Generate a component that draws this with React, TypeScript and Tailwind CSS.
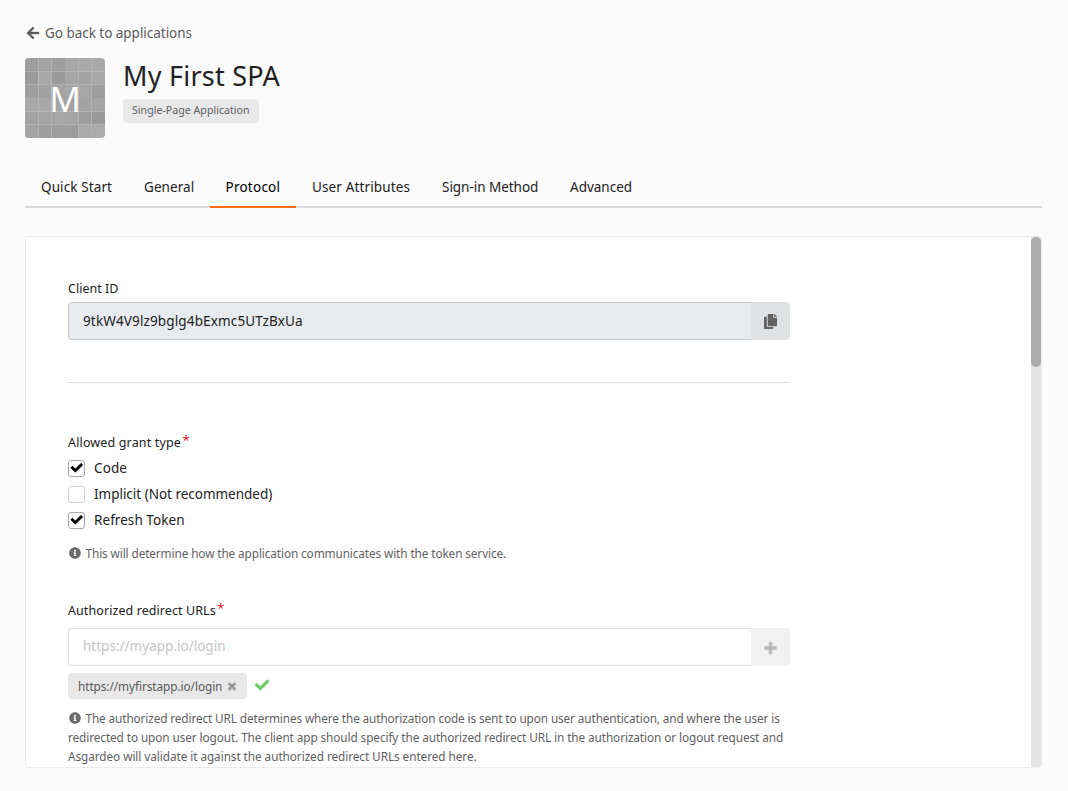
import type { ReactNode } from "react";
import { FaArrowLeft, FaCheck, FaCopy, FaInfoCircle } from "react-icons/fa";

const tabs = [
  { label: "Quick Start", tracking: "tracking-[0.11px]", width: "w-[103px]" },
  { label: "General", tracking: "tracking-[0.06px]", width: "w-[82px]" },
  { label: "Protocol", tracking: "tracking-[0.24px]", width: "w-[86px]", active: true },
  { label: "User Attributes", tracking: "tracking-[0.13px]", width: "w-[130px]" },
  { label: "Sign-in Method", tracking: "tracking-[-0.03px]", width: "w-[128px]" },
  { label: "Advanced", tracking: "tracking-[0px]", width: "w-[94px]" },
];

const shades = [
  ["#9d9d9d", "#a3a3a3", "#9e9e9e", "#a7a7a7", "#a8a8a8", "#a9a9a9"],
  ["#9b9b9b", "#a9a9a9", "#9a9a9a", "#a6a6a6", "#a3a3a3", "#a9a9a9"],
  ["#9e9e9e", "#a2a2a2", "#a3a3a3", "#a6a6a6", "#a6a6a6", "#9e9e9e"],
  ["#a9a9a9", "#a9a9a9", "#a4a4a4", "#a2a2a2", "#a3a3a3", "#a5a5a5"],
  ["#a3a3a3", "#a4a4a4", "#a6a6a6", "#a4a4a4", "#9d9d9d", "#999999"],
  ["#a4a4a4", "#9d9d9d", "#9d9d9d", "#9d9d9d", "#aaaaaa", "#ababab"],
];

function AvatarPattern() {
  const cell = 80 / 6;
  return (
    <svg className="col-start-1 row-start-1 h-20 w-20" viewBox="0 0 80 80">
      {shades.map((row, y) =>
        row.map((fill, x) => (
          <rect
            key={`${x}-${y}`}
            x={x * cell}
            y={y * cell}
            width={cell}
            height={cell}
            fill={fill}
          />
        )),
      )}
      <path
        d="M13.5 0V80M26.5 0V26.6M26.5 40V80M53.5 0V80M66.5 0V80M0 13.5H80M0 26.5H80M0 53.5H80M0 66.5H80"
        stroke="#b2b2b2"
        strokeWidth="0.8"
      />
    </svg>
  );
}

function HeavyPlus({ className }: { className: string }) {
  return (
    <svg className={className} viewBox="0 0 448 512" fill="currentColor">
      <path d="M448 294.2v-76.4c0-13.3-10.7-24-24-24H286.2V56c0-13.3-10.7-24-24-24h-76.4c-13.3 0-24 10.7-24 24v137.8H24c-13.3 0-24 10.7-24 24v76.4c0 13.3 10.7 24 24 24h137.8V456c0 13.3 10.7 24 24 24h76.4c13.3 0 24-10.7 24-24V318.2H424c13.3 0 24-10.7 24-24z" />
    </svg>
  );
}

function Label({ children, required }: { children: ReactNode; required?: boolean }) {
  return (
    <div className="flex h-5 items-center text-[12.5px] leading-5 text-[#212121]">
      <span className="pt-px">{children}</span>
      {required && <span className="ml-[1.5px] h-5 text-[13px] leading-4 text-[#e8202a]">*</span>}
    </div>
  );
}

function Checkbox({ checked, children }: { checked?: boolean; children: ReactNode }) {
  return (
    <div className="flex h-[26px] items-center text-[13.5px] text-[#212121]">
      <span
        className={`mr-[9px] flex h-[17px] w-[17px] items-center justify-center rounded-[3px] border bg-white ${
          checked ? "border-[#a8a8a8]" : "border-[#d4d4d5]"
        }`}
      >
        {checked && <FaCheck className="h-[11.5px] w-[11.5px] overflow-visible stroke-black stroke-[36px] text-black" />}
      </span>
      {children}
    </div>
  );
}

export default function App() {
  return (
    <div className="flex h-[791px] w-[1068px] flex-col overflow-hidden whitespace-nowrap bg-[#fbfbfb] pr-[26px] pl-[25px] pt-[22px] font-['Noto_Sans',sans-serif] text-[#212121]">
      <a className="flex h-[22px] shrink-0 items-center pl-[2px] text-[13.5px] tracking-[-0.03px] text-[#5c5c5c]">
        <FaArrowLeft className="mr-[5px] -ml-px h-[14px] w-[14px] overflow-visible stroke-[#5c5c5c] stroke-[10px]" />
        Go back to applications
      </a>

      <header className="mt-[14px] flex h-20 shrink-0">
        <div className="grid h-20 w-20 overflow-hidden rounded-[4px]">
          <AvatarPattern />
          <span className="col-start-1 row-start-1 text-center text-[35px] leading-[81px] text-white">M</span>
        </div>
        <div className="ml-[18px] flex flex-col items-start">
          <h1 className="h-[35px] text-[27px] leading-[35px] tracking-[0.236px]">My First SPA</h1>
          <span className="mt-[6px] h-6 w-[136px] rounded-[4px] bg-[#e8e8e8] pl-[9px] text-[10.6px] leading-[22px] tracking-[0.02px] text-[#5f5f5f]">
            Single-Page Application
          </span>
        </div>
      </header>

      <nav className="mt-7 flex h-[42px] shrink-0 bg-[linear-gradient(#dadada,#dadada)] bg-[length:100%_2px] bg-bottom bg-no-repeat">
        {tabs.map((t) => (
          <span
            key={t.label}
            className={`border-b-2 text-[13.5px] leading-[42px] ${t.width} ${t.tracking} ${
              t.active ? "border-[#ff6b10] pl-[15.5px] text-black" : "border-transparent pl-4"
            }`}
          >
            {t.label}
          </span>
        ))}
      </nav>

      <main className="mt-7 flex h-[532px] shrink-0 overflow-hidden rounded-[4px] border border-[#ececec] bg-white">
        <div className="flex-1 pl-[42px] pt-[41px]">
          <div className="w-[722px]">
            <Label>
              <span className="tracking-[0.02px]">Client ID</span>
            </Label>
            <div className="mt-1 flex h-[38px]">
              <div className="flex-1 rounded-l-[4px] border border-r-0 border-[#c6cacd] bg-[#e8ebee] pl-[14px] text-[13.5px] leading-9 tracking-[0.14px]">
                9tkW4V9lz9bglg4bExmc5UTzBxUa
              </div>
              <button className="flex w-[39px] items-center justify-center rounded-r-[4px] bg-[#e0e1e2]">
                <FaCopy className="h-[15px] w-[13px] text-[#626262]" />
              </button>
            </div>

            <div className="mt-[42px] h-px bg-[#dcdcdd]" />

            <div className="mt-[49px]">
              <Label required>
                <span className="tracking-[0.15px]">Allowed grant type</span>
              </Label>
            </div>
            <div className="mt-[3px]">
              <Checkbox checked>
                <span className="tracking-[0.1px]">Code</span>
              </Checkbox>
              <Checkbox>
                <span className="tracking-[-0.02px]">Implicit (Not recommended)</span>
              </Checkbox>
              <Checkbox checked>
                <span className="tracking-[0.06px]">Refresh Token</span>
              </Checkbox>
            </div>
            <div className="mt-[11px] flex h-[19px] items-center pl-px text-[11.8px] tracking-[-0.11px] text-[#5f5f5f]">
              <FaInfoCircle className="mb-px mr-[4.5px] h-3 w-3 text-[#6b6b6b]" />
              This will determine how the application communicates with the token service.
            </div>

            <div className="mt-[37px]">
              <Label required>
                <span className="tracking-[0.08px]">Authorized redirect URLs</span>
              </Label>
            </div>
            <div className="mt-2 flex h-[38px]">
              <div className="flex-1 rounded-l-[4px] border border-r-0 border-[#dbdbdc] bg-white pl-[14px] text-[13.5px] leading-[34px] tracking-[0.01px] text-[#c5c5c5]">
                https://myapp.io/login
              </div>
              <button className="flex w-[39px] items-center justify-center rounded-r-[4px] bg-[#f1f1f1]">
                <HeavyPlus className="mt-px h-[14px] w-[13px] text-[#b9b9b9]" />
              </button>
            </div>
            <div className="mt-[7px] flex h-[26px] items-center">
              <span className="flex h-[26px] w-[179px] items-center rounded-[4px] bg-[#e8e8e8] pb-px pl-[10px] text-[11.8px] leading-[24px] tracking-[-0.07px] text-[#5a5a5a]">
                https://myfirstapp.io/login
                <HeavyPlus className="ml-[5px] mt-px h-[11px] w-[10px] rotate-45 text-[#999999]" />
              </span>
              <FaCheck className="mb-[3px] ml-2 h-[14px] w-[14px] overflow-visible stroke-[#6ace62] stroke-[16px] text-[#6ace62]" />
            </div>
            <div className="mt-[10px] text-[11.8px] leading-[19px] text-[#5f5f5f]">
              <p className="flex items-center pl-px tracking-[-0.119px]">
                <FaInfoCircle className="mb-px mr-[4.5px] h-3 w-3 text-[#6b6b6b]" />
                The authorized redirect URL determines where the authorization code is sent to upon user authentication, and where the user is
              </p>
              <p className="tracking-[-0.094px]">
                redirected to upon user logout. The client app should specify the authorized redirect URL in the authorization or logout request and
              </p>
              <p className="tracking-[-0.07px]">
                Asgardeo will validate it against the authorized redirect URLs entered here.
              </p>
            </div>
          </div>
        </div>
        <div className="w-[10px] bg-[#e4e4e4]">
          <div className="h-[130px] rounded-[5px] bg-[#ababab]" />
        </div>
      </main>
    </div>
  );
}
